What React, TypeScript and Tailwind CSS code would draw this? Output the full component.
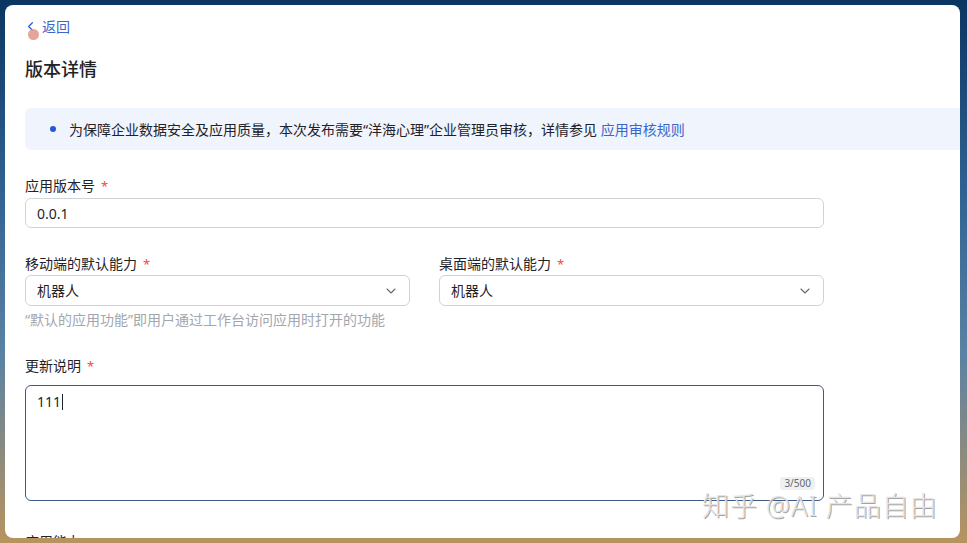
import React from "react";
import { ChevronDown, ChevronLeft } from "lucide-react";

const font = { fontFamily: '"Noto Sans", "Noto Sans CJK SC", sans-serif' };

function Label({ text }: { text: string }) {
  return (
    <div className="flex h-[22px] items-center text-[14px] leading-[22px] text-[#1f2329]">
      <span>{text}</span>
      <span className="ml-[6px] text-[13px] text-[#f54a45]">*</span>
    </div>
  );
}

function Select({ value }: { value: string }) {
  return (
    <div className="flex h-[31px] items-center justify-between rounded-[6px] border border-[#d0d3d6] bg-white pl-[11px] pr-[10px] text-[14px] text-[#1f2329]">
      <span>{value}</span>
      <ChevronDown size={16} strokeWidth={1.6} className="text-[#646a73]" />
    </div>
  );
}

export default function App() {
  return (
    <div
      className="flex h-[543px] w-[967px] overflow-hidden bg-[linear-gradient(180deg,#0b3561_0%,#2f6291_35%,#5a82a3_65%,#b8935f_100%)] pb-[5px] pl-[5px] pr-[7px] pt-[5px]"
      style={font}
    >
      <div className="relative flex-1 overflow-hidden rounded-[8px] bg-white pl-[20px] pt-[11px]">
        <div className="relative flex h-5 items-center text-[14px]">
          <ChevronLeft size={15} strokeWidth={2} className="-ml-[2px] text-[#2b5fd9]" />
          <span className="ml-[4px] text-[#3a67c9]">返回</span>
          <span className="absolute left-[3px] top-[13px] h-[11px] w-[11px] rounded-full bg-[#e39a90] opacity-90" />
        </div>

        <div className="mt-5 text-[18px] font-medium leading-[26px] text-[#1f2329]">版本详情</div>

        <div className="mt-[26px] flex h-[42px] items-center rounded-l-[6px] bg-[#f0f4fc] pl-[25px] text-[14px] text-[#1f2329]">
          <span className="mr-[13px] h-[6px] w-[6px] rounded-full bg-[#2458d6]" />
          <span>
            为保障企业数据安全及应用质量，本次发布需要“洋海心理”企业管理员审核，详情参见{" "}
            <span className="text-[#3a67c9]">应用审核规则</span>
          </span>
        </div>

        <div className="w-[799px]">
          <div className="mt-[25px]">
            <Label text="应用版本号" />
            <div className="mt-[1px] flex h-[30px] items-center rounded-[6px] border border-[#d0d3d6] pl-[11px] text-[14px] text-[#1f2329]">
              0.0.1
            </div>
          </div>

          <div className="mt-[25px] grid grid-cols-2 gap-x-[29px]">
            <div>
              <Label text="移动端的默认能力" />
              <Select value="机器人" />
            </div>
            <div>
              <Label text="桌面端的默认能力" />
              <Select value="机器人" />
            </div>
          </div>
          <div className="mt-1 text-[14px] leading-[20px] text-[#a2a7ae]">
            “默认的应用功能”即用户通过工作台访问应用时打开的功能
          </div>

          <div className="mt-[25px]">
            <Label text="更新说明" />
            <div className="relative mt-2 h-[116px] rounded-[6px] border border-[#3b5a85] pl-[11px] pt-[5px] text-[14px] text-[#1f2329]">
              <span>111</span>
              <span className="ml-[1px] inline-block h-[16px] w-[1px] translate-y-[3px] bg-[#1f2329]" />
              <span className="absolute bottom-[10px] right-[8px] rounded-[3px] bg-[#eef0f1] px-[4px] text-[10px] leading-[13px] text-[#646a73]">
                3/500
              </span>
            </div>
          </div>

          <div className="mt-[30px] text-[14px] leading-[22px] text-[#1f2329]">应用能力</div>
        </div>

        <div
          className="absolute left-[697px] top-[481px] text-[27px] font-light tracking-[1px] text-[#e4e4e4]"
          style={{ textShadow: "1px 1px 0 #a3a3a3" }}
        >
          知乎 @AI 产品自由
        </div>
      </div>
    </div>
  );
}
